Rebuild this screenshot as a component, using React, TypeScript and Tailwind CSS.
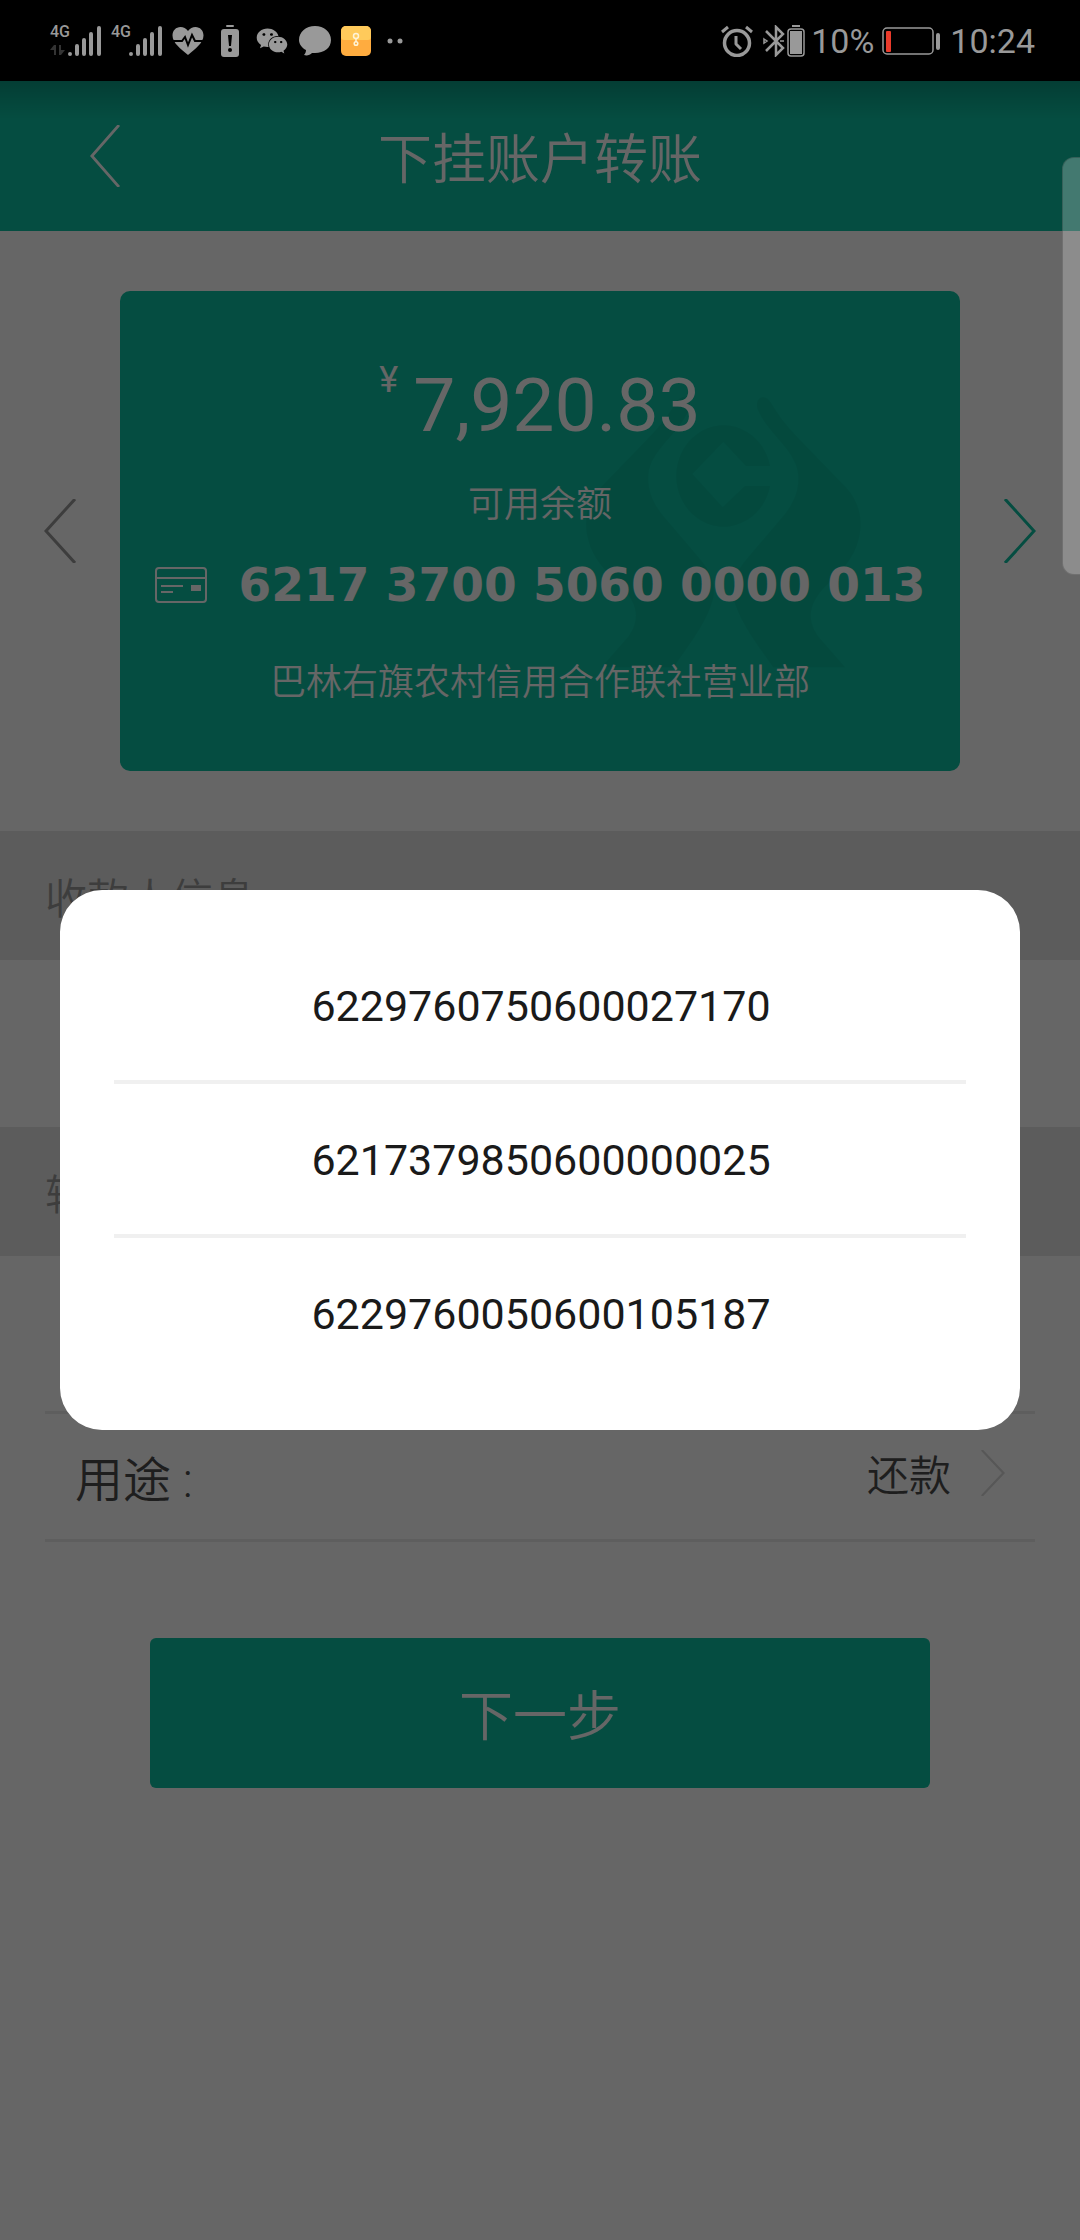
import { useState } from "react";
import { FaWeixin } from "react-icons/fa";

const accounts = [
  "6229760750600027170",
  "6217379850600000025",
  "6229760050600105187",
];

function Signal({ roaming }: { roaming?: boolean }) {
  return (
    <div className="relative h-8 w-[51px] shrink-0">
      <span className="absolute top-0 left-0 text-[16px] leading-[14px] font-medium">
        4G
      </span>
      <svg viewBox="0 0 51 32" className="h-8 w-[51px]" aria-hidden="true">
        <g stroke="currentColor" strokeWidth="4" strokeLinecap="round">
          <path d="M20 29v0M27 21v8M34 15v14M41 9v20M49 3v26" />
        </g>
        {roaming && (
          <path d="M0 25l4-5h2v10H4v-5zM9 20h2v5h4l-4 5H9z" fill="#333" />
        )}
      </svg>
    </div>
  );
}

function StatusBar() {
  return (
    <div className="flex h-[81px] items-center justify-between bg-black pr-[45px] pl-[50px] text-[#999]">
      <div className="flex items-center">
        <Signal roaming />
        <div className="ml-[10px]">
          <Signal />
        </div>
        <svg viewBox="0 0 32 30" className="ml-[10px] h-[30px] w-8">
          <path
            d="M16 29C9 23 .5 17 .5 9.500C.5 4.500 4 1 8.500 1c3 0 5.500 1.500 7.500 4 2-2.500 4.500-4 7.500-4C28 1 31.500 4.500 31.500 9.500 31.500 17 23 23 16 29z"
            fill="currentColor"
          />
          <path
            d="M1 15h9l3-4 3 8 4-10 3 6h8"
            fill="none"
            stroke="#000"
            strokeWidth="2"
          />
        </svg>
        <svg viewBox="0 0 18 32" className="ml-[17px] h-8 w-[18px]">
          <rect x="5" y="0" width="8" height="2" rx="1" fill="currentColor" />
          <rect y="4" width="18" height="28" rx="3" fill="currentColor" />
          <path d="M7 10h4l-1 11H8z" fill="#000" />
          <circle cx="9" cy="25" r="2" fill="#000" />
        </svg>
        <FaWeixin className="ml-[17px] h-8 w-8" />
        <svg viewBox="0 0 32 30" className="ml-[11px] h-[30px] w-8">
          <path
            d="M16 0c9 0 16 6 16 14s-7 13-16 13l-3 0c-2 2-5 3-8 2 1-1 2-3 2-5C3 22 0 18 0 14 0 6 7 0 16 0z"
            fill="currentColor"
          />
        </svg>
        <svg viewBox="0 0 30 30" className="ml-[10px] h-[30px] w-[30px]">
          <rect width="30" height="30" rx="5" fill="#ffac3f" />
          <path
            d="M5 0h20a5 5 0 0 1 5 5v6q0 3-3 3H3q-3 0-3-3V5a5 5 0 0 1 5-5z"
            fill="#ffca5b"
          />
          <g fill="none" stroke="#fff3d6" strokeWidth="1.500">
            <circle cx="15" cy="10" r="2.500" />
            <path d="M15 12v4" />
            <circle cx="15" cy="17.500" r="1.800" />
          </g>
        </svg>
        <svg viewBox="0 0 16 6" className="ml-4 h-[6px] w-4">
          <circle cx="3" cy="3" r="2.500" fill="currentColor" />
          <circle cx="13" cy="3" r="2.500" fill="currentColor" />
        </svg>
      </div>

      <div className="flex items-center text-[34px] leading-[40px]">
        <svg
          viewBox="0 0 32 32"
          className="h-8 w-8"
          fill="none"
          stroke="currentColor"
        >
          <circle cx="16" cy="18" r="12.500" strokeWidth="3.500" />
          <path d="M15 11v8l5 5" strokeWidth="3" strokeLinejoin="round" />
          <path d="M1 7l6-5M25 2l6 5" strokeWidth="3" />
        </svg>
        <svg
          viewBox="0 0 22 32"
          className="ml-[10px] h-8 w-[22px]"
          fill="none"
          stroke="currentColor"
          strokeWidth="2.500"
        >
          <path d="M3 6l17 17-7 7V2l7 7L3 26" />
          <path d="M1 14l3 2-3 2zM17 16h4" strokeWidth="1.500" />
        </svg>
        <svg viewBox="0 0 18 32" className="ml-[2px] h-8 w-[18px]">
          <rect x="5" y="0" width="8" height="2" fill="currentColor" />
          <rect
            x="1"
            y="4"
            width="16"
            height="27"
            rx="3"
            fill="none"
            stroke="currentColor"
            strokeWidth="1.500"
          />
          <rect x="3" y="6" width="12" height="23" fill="currentColor" />
        </svg>
        <span className="ml-[6px]">10%</span>
        <svg viewBox="0 0 58 28" className="ml-[8px] h-7 w-[58px]">
          <rect
            x="1"
            y="1"
            width="50"
            height="26"
            rx="4"
            fill="none"
            stroke="currentColor"
            strokeWidth="1.500"
          />
          <rect x="4" y="4" width="5" height="21" rx="1" fill="#ea3b2b" />
          <rect x="54" y="6" width="4" height="17" rx="2" fill="currentColor" />
        </svg>
        <span className="ml-[10px]">10:24</span>
      </div>
    </div>
  );
}

function Chevron({ className, flip }: { className: string; flip?: boolean }) {
  return (
    <svg
      viewBox="0 0 32 64"
      preserveAspectRatio="none"
      className={className}
      fill="none"
      stroke="currentColor"
      strokeWidth="3"
      aria-hidden="true"
    >
      <path d={flip ? "M31 0L2 32l29 32" : "M1 0l29 32L1 64"} />
    </svg>
  );
}

function Watermark() {
  const body =
    "M592 85C585 55 612 35 635 72C660 115 690 150 725 185L860 325C900 370 910 425 895 480C880 540 840 575 800 615C750 665 735 715 775 770L855 862H640C590 790 535 720 520 650C512 600 540 560 575 520L660 420C700 375 718 335 715 285C710 210 620 160 592 85Z";
  return (
    <svg
      viewBox="0 0 990 900"
      className="absolute top-[89px] right-[70px] h-[300px] w-[330px]"
      fill="#000"
      fillOpacity="0.05"
      aria-hidden="true"
    >
      <path d={body} />
      <path d={body} transform="matrix(-1 0 0 1 980 0)" />
      <path d="M630 258A142 152 0 1 0 630 318H555L488 382L397 282L490 185L558 258Z" />
    </svg>
  );
}

function AccountCard() {
  return (
    <div className="relative flex h-[480px] flex-1 flex-col items-center rounded-[10px] bg-[#0dc0a2] text-white">
      <Watermark />
      <div className="relative mt-[69px] flex h-[90px] items-start gap-[15px]">
        <span className="text-[36px] leading-[40px]">¥</span>
        <span className="text-[75px] leading-[90px]">7,920.83</span>
      </div>
      <p className="relative mt-[28px] text-[36px] leading-[54px] font-[350]">
        可用余额
      </p>
      <div className="relative mt-[23px] flex items-center gap-[32px]">
        <svg
          viewBox="0 0 52 36"
          className="h-9 w-[52px]"
          fill="none"
          stroke="currentColor"
          strokeWidth="2"
          aria-hidden="true"
        >
          <rect x="1" y="1" width="50" height="34" rx="3" />
          <path d="M1 11h50M6 19h22M6 25h12" />
          <rect x="36" y="18" width="10" height="6" fill="currentColor" stroke="none" />
        </svg>
        <span className="font-['DejaVu_Sans',sans-serif] text-[47px] leading-[60px] font-bold whitespace-nowrap">
          6217 3700 5060 0000 013
        </span>
      </div>
      <p className="relative mt-[41px] text-[36px] leading-[54px] font-[350]">
        巴林右旗农村信用合作联社营业部
      </p>
    </div>
  );
}

function SectionTitle({ children }: { children: string }) {
  return (
    <h2 className="flex h-[129px] items-center bg-[#e6e6e6] px-[45px] pt-2 text-[42px] leading-[60px] font-[350] text-[#999]">
      {children}
    </h2>
  );
}

export default function App() {
  const [open, setOpen] = useState(true);

  return (
    <div className="flex min-h-screen flex-col bg-white font-[Roboto,'Noto_Sans_CJK_SC',sans-serif]">
      <StatusBar />

      <div className="relative flex-1">
        <header className="flex h-[150px] items-center bg-[#0dc0a2] bg-linear-to-b from-black/20 to-transparent to-25% px-[90px] text-white">
          <button aria-label="返回" className="w-[30px]">
            <Chevron flip className="h-[62px] w-[30px]" />
          </button>
          <h1 className="flex-1 pt-[10px] pr-[30px] text-center text-[54px] leading-[80px] font-[350]">
            下挂账户转账
          </h1>
        </header>

        <main>
          <div className="flex items-center py-[60px]">
            <button
              aria-label="上一张"
              className="flex w-[120px] justify-center text-[#999]"
            >
              <Chevron flip className="h-16 w-8" />
            </button>
            <AccountCard />
            <button
              aria-label="下一张"
              className="flex w-[120px] justify-center text-[#0dc0a2]"
            >
              <Chevron className="h-16 w-8" />
            </button>
          </div>

          <SectionTitle>收款人信息</SectionTitle>
          <div className="h-[167px]" />
          <SectionTitle>转账信息</SectionTitle>

          <div className="mx-[45px]">
            <div className="h-[158px] border-b-[3px] border-[#ececec]" />
            <div className="flex h-[128px] items-center justify-between border-b-[3px] border-[#ececec] px-[30px] font-[350] text-[#4d4d4d]">
              <span className="pt-2 text-[48px] leading-[60px]">用途 :</span>
              <button className="flex items-center gap-[30px] text-[42px] leading-[60px]">
                还款
                <Chevron className="mb-2 h-[46px] w-6 text-[#d9d9d9]" />
              </button>
            </div>
          </div>

          <div className="px-[150px] pt-24">
            <button className="h-[150px] w-full rounded-[6px] bg-[#0dc0a2] pt-[10px] text-[54px] leading-[80px] font-[350] text-white">
              下一步
            </button>
          </div>
        </main>

        {open && (
          <div
            className="absolute inset-0 flex items-center justify-center bg-black/60 px-[60px] pb-[2px]"
            onClick={() => setOpen(false)}
          >
            <ul
              role="dialog"
              aria-label="选择账户"
              className="w-full divide-y-4 divide-[#f0f0f0] rounded-[42px] border-x-[54px] border-t-[40px] border-b-[42px] border-white bg-white"
              onClick={(e) => e.stopPropagation()}
            >
              {accounts.map((account) => (
                <li key={account}>
                  <button
                    className="h-[150px] w-full pt-[2px] pl-[2px] text-[43px] leading-[60px] text-[#1a1a1a]"
                    onClick={() => setOpen(false)}
                  >
                    {account}
                  </button>
                </li>
              ))}
            </ul>
          </div>
        )}

        {/* edge panel handle */}
        <div className="absolute top-[76px] right-0 h-[418px] w-[18px] rounded-l-[12px] border border-r-0 border-black/20 bg-white/25" />
      </div>
    </div>
  );
}
